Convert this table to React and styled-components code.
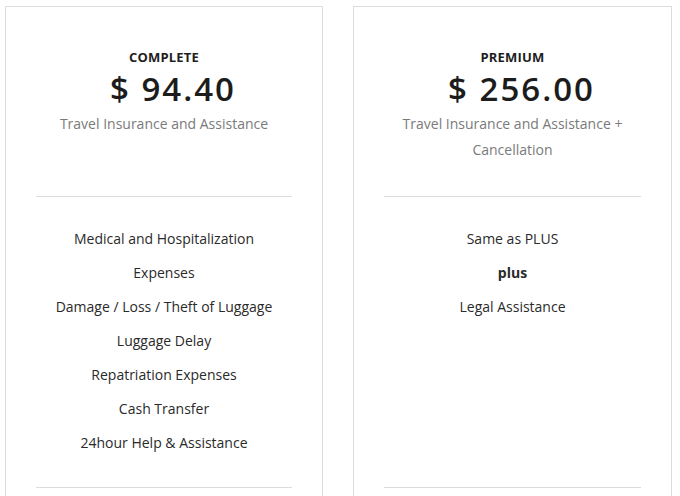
import React from 'react';
import styled, { createGlobalStyle } from 'styled-components';

const GlobalStyle = createGlobalStyle`
    body {
        margin: 0;
        background: #fff;
        overflow: hidden;
        font-family: "Open Sans", "Noto Sans", sans-serif;
    }
`

const plans = [
    {
        name: 'COMPLETE',
        price: '$ 94.40',
        desc: 'Travel Insurance and Assistance',
        items: [
            { text: 'Medical and Hospitalization' },
            { text: 'Expenses' },
            { text: 'Damage / Loss / Theft of Luggage' },
            { text: 'Luggage Delay' },
            { text: 'Repatriation Expenses' },
            { text: 'Cash Transfer' },
            { text: '24hour Help & Assistance' },
        ],
    },
    {
        name: 'PREMIUM',
        price: '$ 256.00',
        desc: 'Travel Insurance and Assistance + Cancellation',
        items: [
            { text: 'Same as PLUS' },
            { text: 'plus', bold: true },
            { text: 'Legal Assistance' },
        ],
    },
]

function PlanCard({ plan }) {
    return (
        <Card>
            <Header>
                <Name>{plan.name}</Name>
                <Price>{plan.price}</Price>
                <Desc>{plan.desc}</Desc>
            </Header>
            <Divider />
            <Features>
                {plan.items.map((item, i) => (
                    <Feature key={i} $bold={item.bold}>{item.text}</Feature>
                ))}
            </Features>
            <Divider />
        </Card>
    )
}

export default function App() {
    return (
        <>
            <GlobalStyle />
            <Page>
                {plans.map(p => <PlanCard key={p.name} plan={p} />)}
            </Page>
        </>
    )
}

const Page = styled.div`
    display: grid;
    grid-template-columns: 318px 319px;
    gap: 30px;
    padding: 6px 0 0 5px;
`

const Card = styled.div`
    min-height: 540px;
    box-sizing: border-box;
    border: 1px solid #dcdcdc;
    background: #fff;
    text-align: center;
`

const Header = styled.div`
    height: 189px;
    box-sizing: border-box;
    padding: 40px 40px 0;
`

const Name = styled.div`
    font-size: 13px;
    line-height: 20px;
    font-weight: 700;
    color: #1e1e1e;
    letter-spacing: 0.2px;
`

const Price = styled.div`
    margin-top: 2px;
    padding-left: 18px;
    font-size: 33px;
    line-height: 40px;
    font-weight: 600;
    color: #1c1c1c;
    letter-spacing: 2px;
`

const Desc = styled.div`
    margin-top: 2px;
    font-size: 14px;
    line-height: 26px;
    color: #7a7a7a;
`

const Divider = styled.div`
    height: 1px;
    margin: 0 30px;
    background: #dcdcdc;
`

const Features = styled.ul`
    list-style: none;
    margin: 0;
    height: 290px;
    box-sizing: border-box;
    padding: 25px 0 0;
`

const Feature = styled.li`
    font-size: 14px;
    line-height: 34px;
    color: #2a2a2a;
    font-weight: ${p => (p.$bold ? 700 : 400)};
`
